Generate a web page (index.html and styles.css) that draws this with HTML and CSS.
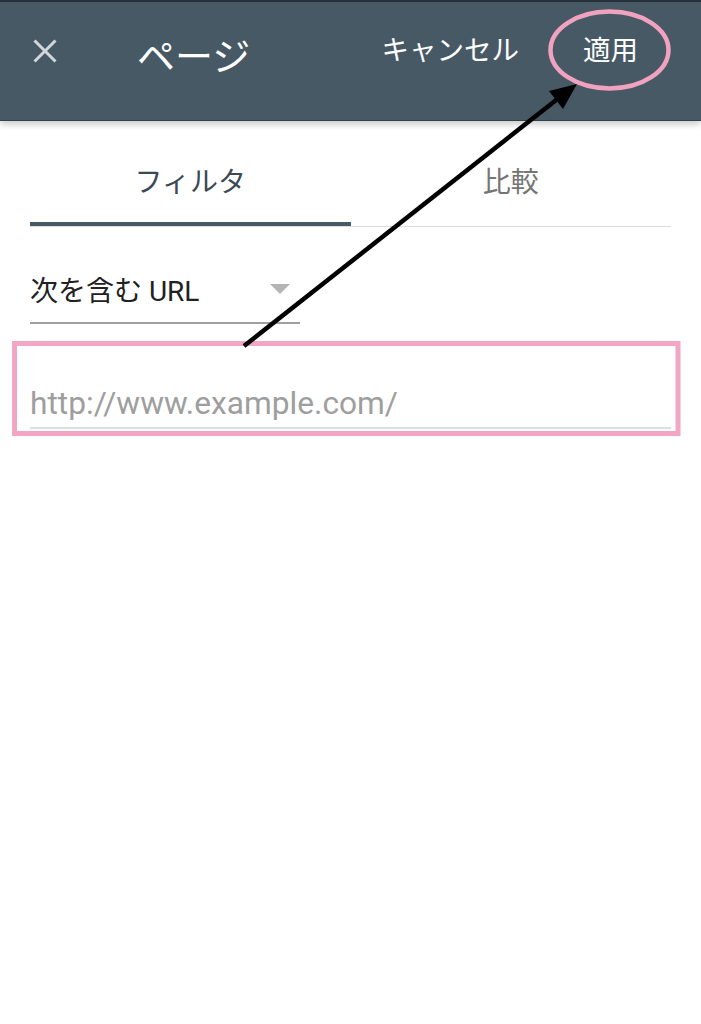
FILE: index.html
```html
<!DOCTYPE html>
<html lang="ja">
<head>
<meta charset="utf-8">
<title>ページ</title>
<link rel="stylesheet" href="styles.css">
</head>
<body>
<header class="appbar">
  <span class="close" aria-label="閉じる">
    <svg width="24" height="24" viewBox="0 0 24 24"><path d="M1.5 1.5 L22.5 22.5 M22.5 1.5 L1.5 22.5" stroke="#d3d7da" stroke-width="3" fill="none"/></svg>
  </span>
  <h1 class="title">ページ</h1>
  <div class="actions">
    <span class="action">キャンセル</span>
    <span class="action">適用</span>
  </div>
</header>
<main class="content">
  <nav class="tabs">
    <div class="tab active">フィルタ</div>
    <div class="tab">比較</div>
  </nav>
  <div class="select">
    <span class="select-label">次を含む URL</span>
    <span class="caret"></span>
  </div>
  <div class="field">
    <span class="placeholder">http://www.example.com/</span>
  </div>
</main>
<svg class="annotations" width="701" height="1024" viewBox="0 0 701 1024">
  <ellipse cx="609.5" cy="50" rx="59" ry="38.5" fill="none" stroke="#f0a2bf" stroke-width="4.5"/>
  <rect x="14.5" y="343.5" width="663.5" height="90" fill="none" stroke="#f2a6c3" stroke-width="5"/>
  <line x1="244" y1="346" x2="560" y2="97" stroke="#000" stroke-width="4.5"/>
  <polygon points="577,84 549,91 563,109" fill="#000"/>
</svg>
</body>
</html>
```

FILE: styles.css
```css
html, body {
  margin: 0;
  padding: 0;
  background: #ffffff;
}

body {
  width: 701px;
  min-height: 1024px;
  position: relative;
  font-family: Roboto, "Noto Sans CJK JP", sans-serif;
  overflow: hidden;
}

.appbar {
  box-sizing: border-box;
  height: 121px;
  display: flex;
  align-items: center;
  padding-bottom: 20px;
  background: #485966;
  border-top: 2px solid #24303a;
  border-bottom: 1px solid #34424c;
  box-shadow: 0 3px 7px rgba(0, 0, 0, 0.22);
  color: #ffffff;
  position: relative;
  z-index: 1;
}

.close {
  display: flex;
  margin-left: 33px;
}

.title {
  margin: 12px 0 0 80px;
  font-size: 38px;
  font-weight: 400;
  line-height: 1;
  letter-spacing: 0;
}

.actions {
  margin-left: auto;
  margin-right: 63px;
  display: flex;
  gap: 64px;
  font-size: 27.5px;
  line-height: 1;
}

.action {
  color: #ffffff;
}

.content {
  display: flex;
  flex-direction: column;
}

.tabs {
  margin: 0 30px;
  display: grid;
  grid-template-columns: 1fr 1fr;
  border-bottom: 1px solid #dcdcdc;
}

.tab {
  height: 84px;
  padding-top: 17px;
  display: flex;
  align-items: center;
  justify-content: center;
  font-size: 28px;
  color: #757575;
  border-bottom: 4px solid transparent;
}

.tab.active {
  color: #3b4955;
  border-bottom-color: #485966;
}

.select {
  margin: 0 0 0 30px;
  width: 270px;
  height: 67px;
  padding-top: 28px;
  display: flex;
  align-items: center;
  border-bottom: 2px solid #a0a0a0;
}

.select-label {
  font-size: 28px;
  color: #212121;
}

.caret {
  margin-left: auto;
  margin-right: 10px;
  width: 0;
  height: 0;
  border-left: 10px solid transparent;
  border-right: 10px solid transparent;
  border-top: 10px solid #b5b5b5;
}

.field {
  margin: 0 30px;
  padding-top: 62px;
  padding-bottom: 5px;
  border-bottom: 2px solid #dedede;
}

.placeholder {
  display: block;
  font-size: 31.7px;
  line-height: 36px;
  color: #9e9e9e;
}

.annotations {
  position: absolute;
  top: 0;
  left: 0;
  z-index: 2;
  pointer-events: none;
}
```
